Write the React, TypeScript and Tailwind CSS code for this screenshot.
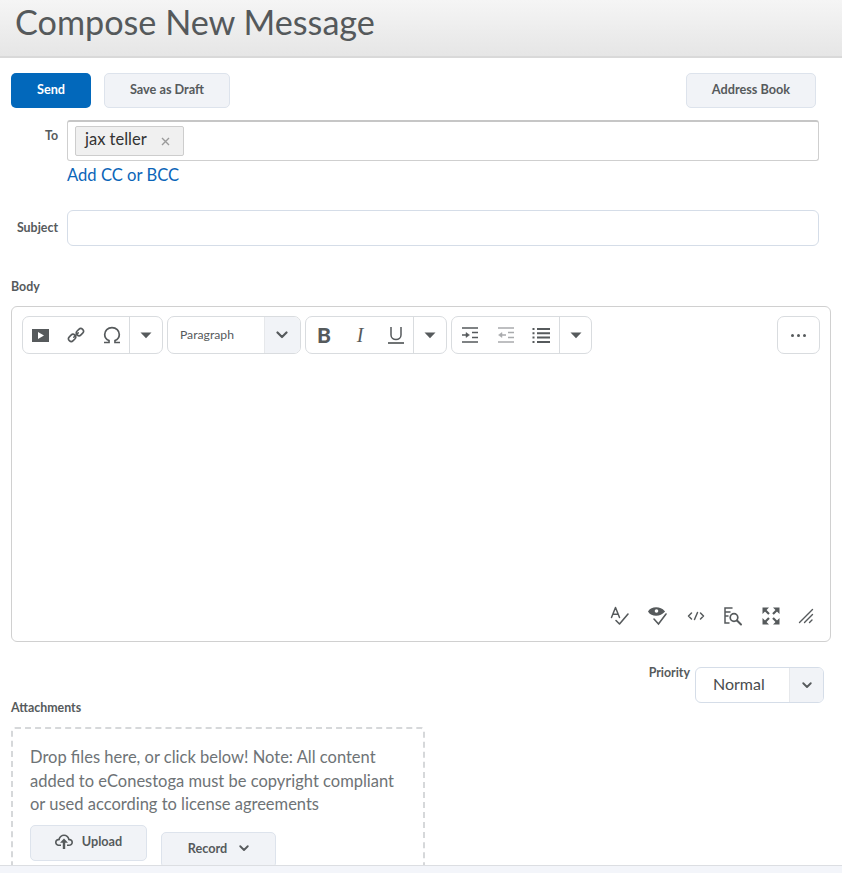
import React from "react";

const I = ({ children, w = 20, h = 20, vb = "0 0 20 20" }: { children: React.ReactNode; w?: number; h?: number; vb?: string }) => (
  <svg width={w} height={h} viewBox={vb} fill="none" stroke="#565a5c" strokeWidth={1.6} strokeLinecap="round" strokeLinejoin="round" className="block shrink-0">
    {children}
  </svg>
);

const Caret = () => (
  <svg width="12" height="7" viewBox="0 0 12 7" className="block"><path d="M0.5 0.5H11.5L6 6.2Z" fill="#565a5c" /></svg>
);
const Chevron = ({ w = 12 }: { w?: number }) => (
  <svg width={w} height={w * 0.67} viewBox="0 0 12 8" fill="none" className="block"><path d="M1.5 1.5L6 6L10.5 1.5" stroke="#565a5c" strokeWidth="2.2" strokeLinecap="round" strokeLinejoin="round" /></svg>
);

const Btn = ({ children, cls }: { children: React.ReactNode; cls: string }) => (
  <div className={`flex items-center justify-center rounded-[5px] border border-[#dde3ec] bg-[#f1f3f7] pb-[2px] text-[12.7px] font-bold text-[#565a5c] ${cls}`}>{children}</div>
);

const Cell = ({ children, w }: { children: React.ReactNode; w: string }) => (
  <div className={`flex h-full items-center justify-center ${w}`}>{children}</div>
);

const Group = ({ children, cls }: { children: React.ReactNode; cls: string }) => (
  <div className={`flex h-[38px] items-center rounded-[7px] border border-[#d9dcdf] bg-white ${cls}`}>{children}</div>
);

export default function App() {
  return (
    <div className="flex h-[873px] w-[842px] flex-col overflow-hidden bg-white font-['Lato',sans-serif] text-[#565a5c]">
      <main className="min-h-0 flex-1 overflow-hidden">
        <header className="flex h-[58px] items-start border-b-2 border-[#d9d9d9] bg-gradient-to-b from-[#f5f5f5] to-[#e6e6e6] pl-[15px]">
          <h1 className="text-[34.2px] leading-[44px] font-normal text-[#55595b]">Compose New Message</h1>
        </header>

        <div className="mt-[15px] flex h-[35px] pl-[11px]">
          <div className="flex w-[80px] items-center justify-center rounded-[5px] bg-[#0268bb] pb-[2px] text-[12.7px] font-bold text-white">Send</div>
          <Btn cls="ml-[13px] w-[126px]">Save as Draft</Btn>
          <Btn cls="ml-[456px] w-[130px]">Address Book</Btn>
        </div>

        <div className="mt-[12px] flex">
          <div className="w-[58px] pt-[8px] text-right text-[12.4px] leading-[16px] font-bold">To</div>
          <div className="ml-[9px] w-[752px]">
            <div className="flex h-[41px] items-center rounded-[3px] border border-[#cfcfcf] border-t-2 border-t-[#c6c6c6] bg-white pl-[7px]">
              <div className="flex h-[30px] w-[109px] items-center rounded-[2px] border border-[#cdcdcd] bg-[#f0f0f0] pb-[3px] pl-[9px] text-[16.5px] text-[#333]">
                jax teller
                <svg width="9" height="9" viewBox="0 0 9 9" className="mt-[3px] ml-[14px]"><path d="M1 1L8 8M8 1L1 8" stroke="#9a9a9a" strokeWidth="1.4" /></svg>
              </div>
            </div>
            <div className="mt-[3px] text-[16.6px] leading-[22px] text-[#0b65b8]">Add CC or BCC</div>
          </div>
        </div>

        <div className="mt-[24px] flex">
          <div className="w-[58px] pt-[10px] text-right text-[12.4px] leading-[16px] font-bold">Subject</div>
          <div className="ml-[9px] h-[36px] w-[752px] rounded-[6px] border border-[#d5dde8] bg-white" />
        </div>

        <div className="mt-[33px] pl-[11px] text-[12.4px] leading-[16px] font-bold">Body</div>

        <div className="mt-[11px] ml-[11px] h-[336px] w-[820px] rounded-[6px] border border-[#d0d0d0] bg-white">
          <div className="mt-[9px] flex items-start pl-[10px]">
            <Group cls="w-[141px]">
              <Cell w="w-[35px]">
                <svg width="17" height="13" viewBox="0 0 17 13" className="block"><path d="M0 0H17V13H0Z" fill="#565a5c" /><path d="M6 3L12 6.5L6 10Z" fill="#fff" /></svg>
              </Cell>
              <Cell w="w-[36px]">
                <I w={18} h={18} vb="0 0 18 18"><rect x="1.2" y="9.2" width="7.8" height="5.4" rx="2.7" transform="rotate(-45 5.1 11.9)" /><rect x="9" y="3.4" width="7.8" height="5.4" rx="2.7" transform="rotate(-45 12.9 6.1)" /><path d="M6.8 11.2L11.2 6.8" /></I>
              </Cell>
              <Cell w="w-[35px]">
                <svg width="18" height="18" viewBox="0 0 18 18" fill="none" className="block"><path d="M1 16.5H6V14.6C3.4 13.4 1.7 11.2 1.7 8.4C1.7 4.5 4.8 1.6 9 1.6S16.3 4.5 16.3 8.4C16.3 11.2 14.6 13.4 12 14.6V16.5H17" stroke="#565a5c" strokeWidth="1.7" /></svg>
              </Cell>
              <div className="h-full w-px bg-[#d9dcdf]" />
              <Cell w="flex-1 pr-[1px]"><Caret /></Cell>
            </Group>
            <Group cls="ml-[4px] w-[134px] overflow-hidden">
              <div className="flex-1 pl-[12px] text-[12.2px] text-[#565a5c]">Paragraph</div>
              <div className="flex h-full w-[36px] items-center justify-center border-l border-[#e6e8eb] bg-[#f1f3f7] pr-[2px]"><Chevron /></div>
            </Group>
            <Group cls="ml-[4px] w-[142px]">
              <Cell w="w-[36px] pb-[2px]"><span className="text-[21px] leading-none font-black text-[#565a5c]">B</span></Cell>
              <Cell w="w-[36px]"><span className="font-['Liberation_Serif',serif] text-[20px] leading-none text-[#565a5c] italic">I</span></Cell>
              <Cell w="w-[35px]">
                <svg width="18" height="18" viewBox="0 0 18 18" fill="none" className="block"><path d="M4 1V9C4 15 14 15 14 9V1" stroke="#565a5c" strokeWidth="1.5" /><path d="M1 17H17" stroke="#565a5c" strokeWidth="1.7" /></svg>
              </Cell>
              <div className="h-full w-px bg-[#d9dcdf]" />
              <Cell w="flex-1"><Caret /></Cell>
            </Group>
            <Group cls="ml-[4px] w-[141px]">
              <Cell w="w-[36px]">
                <svg width="18" height="16" viewBox="0 0 18 16" fill="none" stroke="#565a5c" strokeWidth="1.6" className="block"><path d="M1 1H17M11 5.5H17M11 10.5H17M1 15H17M1 8H6" /><path d="M5 5.5L8.5 8L5 10.5Z" fill="#565a5c" strokeWidth="0.5" /></svg>
              </Cell>
              <Cell w="w-[36px]">
                <svg width="18" height="16" viewBox="0 0 18 16" fill="none" stroke="#a9abad" strokeWidth="1.6" className="block"><path d="M1 1H17M11 5.5H17M11 10.5H17M1 15H17M4 8H9" /><path d="M5 5.5L1.5 8L5 10.5Z" fill="#a9abad" strokeWidth="0.5" /></svg>
              </Cell>
              <Cell w="w-[35px] pr-[1px]">
                <svg width="18" height="17" viewBox="0 0 18 17" fill="none" stroke="#565a5c" strokeWidth="2" className="block"><path d="M0.5 2H2.5M5 2H18M0.5 6.3H2.5M5 6.3H18M0.5 10.6H2.5M5 10.6H18M0.5 15H2.5M5 15H18" /></svg>
              </Cell>
              <div className="h-full w-px bg-[#d9dcdf]" />
              <Cell w="flex-1"><Caret /></Cell>
            </Group>
            <Group cls="ml-[185px] w-[43px] justify-center gap-[3px]">
              <span className="h-[3px] w-[3px] rounded-full bg-[#565a5c]" />
              <span className="h-[3px] w-[3px] rounded-full bg-[#565a5c]" />
              <span className="h-[3px] w-[3px] rounded-full bg-[#565a5c]" />
            </Group>
          </div>

          <div className="mt-[252px] flex items-center justify-end gap-[18.4px] pr-[16px]">
            <I vb="0 0 20 20">
              <path d="M1.5 11.5L5.5 1.5L9.5 11.5M3 8.2H8" strokeWidth="1.5" /><path d="M6 14.5L9.5 18L18 8" />
            </I>
            <svg width="20" height="20" viewBox="0 0 20 20" fill="none" stroke="#565a5c" strokeWidth="1.6" strokeLinecap="round" className="block">
              <path d="M1 5.5C4 1 12 1 16 5.5C12 10 4 10 1 5.5Z" fill="#565a5c" /><circle cx="8.5" cy="5" r="1.8" fill="#fff" stroke="none" /><path d="M6 13L10.5 18L18 8" />
            </svg>
            <svg width="18" height="10" viewBox="0 0 18 10" fill="none" stroke="#565a5c" strokeWidth="1.5" strokeLinecap="round" strokeLinejoin="round" className="block">
              <path d="M4.5 2L1.5 5L4.5 8M13.5 2L16.5 5L13.5 8M10.5 1.5L7.5 8.5" />
            </svg>
            <svg width="20" height="20" viewBox="0 0 20 20" fill="none" stroke="#565a5c" strokeWidth="1.5" strokeLinecap="round" className="block">
              <path d="M9 2H2V17H6M2 6H7M2 10H5" /><circle cx="11" cy="11.5" r="3.8" strokeWidth="1.7" /><path d="M14 14.5L18 18.5" strokeWidth="2" />
            </svg>
            <svg width="18" height="18" viewBox="0 0 18 18" fill="#565a5c" stroke="#565a5c" strokeWidth="2.2" className="block">
              <path d="M0.5 7V0.5H7ZM17.5 7V0.5H11ZM0.5 11V17.5H7ZM17.5 11V17.5H11Z" stroke="none" /><path d="M3 3L7 7M15 3L11 7M3 15L7 11M15 15L11 11" />
            </svg>
            <svg width="16" height="16" viewBox="0 0 16 16" fill="none" stroke="#565a5c" strokeWidth="1.4" strokeLinecap="round" className="block">
              <path d="M1.5 14.5L14.5 1.5M6.5 14.5L14.5 6.5M11.5 14.5L14 12" />
            </svg>
          </div>
        </div>

        <div className="mt-[25px] flex justify-end">
          <div className="text-[12.4px] leading-[11px] font-bold">Priority</div>
          <div className="mr-[18px] ml-[5px] flex h-[36px] w-[129px] overflow-hidden rounded-[6px] border border-[#d5dde8]">
            <div className="flex flex-1 items-center pb-[2px] pl-[17px] text-[16px] text-[#494c4e]">Normal</div>
            <div className="flex w-[34px] items-center justify-center border-l border-[#e6e8eb] bg-[#f1f3f7]"><Chevron w={10} /></div>
          </div>
        </div>

        <div className="mt-[-3px] pl-[11px] text-[12.4px] leading-[16px] font-bold">Attachments</div>

        <div className="mt-[11px] ml-[11px] h-[200px] w-[414px] rounded-[4px] border-2 border-dashed border-[#d6d8da] pt-[17px] pl-[17px]">
          <p className="w-[380px] text-[16.5px] leading-[23.5px] text-[#6e7376]">
            Drop files here, or click below! Note: All content added to eConestoga must be copyright compliant or used according to license agreements
          </p>
          <div className="mt-[8px] flex items-start">
            <Btn cls="h-[36px] w-[117px] gap-[9px]">
              <svg width="18" height="15" viewBox="0 0 18 15" className="block"><path d="M4.5 12C1 12 0 9.8 0 8.2C0 6 1.8 4.7 3.4 4.8C4.2 2.2 6.4 0.5 9 0.5C11.8 0.5 13.9 2.4 14.5 4.8C16.4 4.8 18 6.2 18 8.2C18 10.2 16.5 12 13.5 12H12V10.6H13.5C15.3 10.6 16.4 9.6 16.4 8.2C16.4 7 15.4 6.2 13.2 6.2C13 3.8 11.4 2 9 2C6.6 2 5 3.8 4.8 6.2C2.8 6.2 1.6 7 1.6 8.2C1.6 9.6 2.8 10.6 4.5 10.6H6V12Z" fill="#565a5c" /><path d="M9 4.5L13 8.8H10.2V15H7.8V8.8H5Z" fill="#565a5c" /></svg>
              Upload
            </Btn>
            <Btn cls="mt-[7px] ml-[14px] h-[36px] w-[115px] gap-[12px]">Record <Chevron w={10} /></Btn>
          </div>
        </div>
      </main>
      <div className="h-[8px] shrink-0 border-t border-[#dcdee2] bg-[#f3f5fa]" />
    </div>
  );
}
